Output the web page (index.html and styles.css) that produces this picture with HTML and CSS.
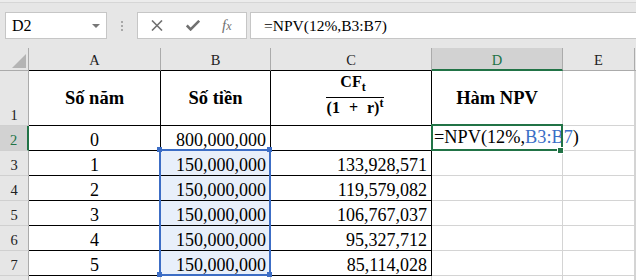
FILE: index.html
```html
<!DOCTYPE html>
<html lang="vi">
  <head>
    <meta charset="UTF-8" />
    <title>Hàm NPV</title>
    <link rel="stylesheet" href="styles.css">
  </head>
  <body>
    <!-- thanh công thức -->
    <div class="bar">
      <div class="bar-line"></div>
      <div class="bar-row">
        <div class="namebox">
          <span>D2</span>
          <i class="caret"></i>
        </div>
        <div class="grip"><i></i><i></i><i></i></div>
        <div class="fbtns">
          <svg width="12" height="11" viewBox="0 0 12 11">
            <path d="M1 0.5 L11 10.5 M11 0.5 L1 10.5" stroke="#707070" stroke-width="1.6" fill="none" />
          </svg>
          <svg width="14" height="11" viewBox="0 0 14 11">
            <path d="M0.8 5.5 L4.6 9.4 L13.2 0.8" stroke="#707070" stroke-width="2.6" fill="none" />
          </svg>
          <span class="fx">f<span>x</span></span>
        </div>
        <div class="finput">=NPV(12%,B3:B7)</div>
      </div>
    </div>

    <!-- bảng tính -->
    <div class="sheet">
      <div class="ch corner"><i class="tri"></i></div>
      <div class="ch tb">A</div>
      <div class="ch tb">B</div>
      <div class="ch tb">C</div>
      <div class="ch sel">D</div>
      <div class="ch">E</div>
      <div class="ch last"></div>

      <div class="rh">1</div>
      <div class="c t hd">Số năm</div>
      <div class="c t hd">Số tiền</div>
      <div class="c t frac-cell">
        <div class="frac">
          <div class="num">CF<sub>t</sub></div>
          <div class="den">(1<span class="plus">+</span>r)<sup>t</sup></div>
        </div>
      </div>
      <div class="c hd">Hàm NPV</div>
      <div class="c"></div>
      <div class="c"></div>

      <div class="rh sel">2</div>
      <div class="c t ctr">0</div>
      <div class="c t num">800,000,000</div>
      <div class="c t"></div>
      <div class="c edit-cell">=NPV(12%,<span class="ref">B3:B7</span>)<i class="cursor"></i></div>
      <div class="c"></div>
      <div class="c"></div>

      <div class="rh">3</div>
      <div class="c t ctr">1</div>
      <div class="c t num rng">150,000,000</div>
      <div class="c t num">133,928,571</div>
      <div class="c"></div>
      <div class="c"></div>
      <div class="c"></div>

      <div class="rh">4</div>
      <div class="c t ctr">2</div>
      <div class="c t num rng">150,000,000</div>
      <div class="c t num">119,579,082</div>
      <div class="c"></div>
      <div class="c"></div>
      <div class="c"></div>

      <div class="rh">5</div>
      <div class="c t ctr">3</div>
      <div class="c t num rng">150,000,000</div>
      <div class="c t num">106,767,037</div>
      <div class="c"></div>
      <div class="c"></div>
      <div class="c"></div>

      <div class="rh">6</div>
      <div class="c t ctr">4</div>
      <div class="c t num rng">150,000,000</div>
      <div class="c t num">95,327,712</div>
      <div class="c"></div>
      <div class="c"></div>
      <div class="c"></div>

      <div class="rh">7</div>
      <div class="c t ctr">5</div>
      <div class="c t num rng">150,000,000</div>
      <div class="c t num">85,114,028</div>
      <div class="c"></div>
      <div class="c"></div>
      <div class="c"></div>

      <div class="rh"></div>
      <div class="c"></div>
      <div class="c"></div>
      <div class="c"></div>
      <div class="c"></div>
      <div class="c"></div>
      <div class="c"></div>

      <!-- vùng chọn B3:B7 và ô đang sửa D2 -->
      <div class="range"></div>
      <i class="handle blue" style="left: 157px; top: 99px"></i>
      <i class="handle blue" style="left: 267px; top: 99px"></i>
      <i class="handle blue" style="left: 157px; top: 224px"></i>
      <i class="handle blue" style="left: 267px; top: 224px"></i>
      <div class="edit"></div>
      <i class="handle green" style="left: 558px; top: 100px"></i>
    </div>
  </body>
</html>
```

FILE: styles.css
```css
:root {
  --bar-bg: #e6e6e6;
  --box-border: #c6c6c6;
  --grid: #d4d4d4;
  --hd-line: #ababab;
  --green: #217346;
  --blue: #3c6dc5;
}

* {
  box-sizing: border-box;
}

body {
  margin: 0;
  width: 636px;
  height: 280px;
  overflow: hidden;
  background: #fff;
  font-family: "Liberation Serif", "Times New Roman", "DejaVu Serif", serif;
  color: #000;
}

/* thanh công thức */
.bar {
  height: 48px;
  background: var(--bar-bg);
}
.bar-line {
  height: 3px;
  background: #ececec;
  border-bottom: 1px solid #d6d6d6;
}
.bar-row {
  display: flex;
  align-items: center;
  margin-top: 9px;
  padding-left: 5px;
  height: 27px;
}
.namebox {
  width: 102px;
  height: 27px;
  display: flex;
  align-items: center;
  justify-content: space-between;
  padding: 0 6px 0 6px;
  background: #fff;
  border: 1px solid var(--box-border);
  font-size: 16px;
}
.caret {
  width: 0;
  height: 0;
  border-left: 4px solid transparent;
  border-right: 4px solid transparent;
  border-top: 4px solid #777;
  margin-top: 1px;
}
.grip {
  display: flex;
  flex-direction: column;
  gap: 2px;
  margin-left: 14px;
}
.grip i {
  width: 2px;
  height: 2px;
  background: #a8a8a8;
}
.fbtns {
  margin-left: 14px;
  width: 110px;
  height: 27px;
  display: flex;
  align-items: center;
  background: #fff;
  border: 1px solid var(--box-border);
  padding-left: 13px;
}
.fbtns svg:nth-child(2) {
  margin-left: 23px;
}
.fx {
  margin-left: 22px;
  font-style: italic;
  font-size: 15px;
  color: #707070;
  line-height: 1;
}
.fx span {
  font-size: 12px;
}
.finput {
  flex: 1;
  margin-left: 3px;
  margin-right: -2px;
  height: 27px;
  display: flex;
  align-items: center;
  padding-left: 13px;
  background: #fff;
  border: 1px solid var(--box-border);
  font-size: 15.5px;
}

/* bảng tính */
.sheet {
  position: relative;
  display: grid;
  grid-template-columns: 29px 132px 110px 161px 131px 72px 1px;
  grid-template-rows: 23px 55px repeat(7, 25px);
}

.ch {
  display: flex;
  align-items: flex-end;
  justify-content: center;
  padding-bottom: 1px;
  background: var(--bar-bg);
  border-right: 1px solid var(--hd-line);
  border-bottom: 1px solid var(--hd-line);
  font-size: 14.5px;
  line-height: 18px;
  color: #222;
}
.ch.tb {
  border-bottom-color: #000;
}
.ch.sel {
  background: #d2d2d2;
  color: var(--green);
  border-bottom: 2px solid var(--green);
  padding-bottom: 0;
}
.ch.last {
  border-right: 0;
}
.corner {
  justify-content: flex-end;
  padding: 0 2px 2px 0;
}
.tri {
  width: 0;
  height: 0;
  border-left: 14px solid transparent;
  border-bottom: 14px solid #b4b4b4;
}

.rh {
  display: flex;
  align-items: flex-end;
  justify-content: center;
  padding-bottom: 1px;
  background: var(--bar-bg);
  border-right: 1px solid var(--hd-line);
  border-bottom: 1px solid #d0d0d0;
  font-size: 14.5px;
  line-height: 18px;
  color: #222;
}
.rh.sel {
  background: #d2d2d2;
  color: var(--green);
  border-right: 2px solid var(--green);
}

.c {
  display: flex;
  align-items: flex-end;
  border-right: 1px solid var(--grid);
  border-bottom: 1px solid var(--grid);
  font-size: 18px;
  line-height: 20px;
  white-space: nowrap;
}
.c.t {
  border-color: #000;
}
.ctr {
  justify-content: center;
}
.num {
  justify-content: flex-end;
  padding-right: 4px;
}
.rng {
  background: #e8effa;
}
.hd {
  align-items: center;
  justify-content: center;
  font-weight: bold;
  font-size: 18.5px;
}

/* công thức CF_t / (1 + r)^t */
.frac-cell {
  align-items: flex-start;
  justify-content: center;
  padding: 2px 0 0 8px;
}
.frac {
  display: flex;
  flex-direction: column;
  align-items: center;
  font-weight: bold;
  font-size: 16px;
  line-height: 18px;
}
.frac .num {
  padding: 0 4px 6px 0;
}
.frac .den {
  border-top: 1px solid #000;
  padding: 1px 1px 0 1px;
}
.plus {
  margin: 0 9px;
}
.frac sub,
.frac sup {
  font-size: 12px;
  line-height: 0;
}

.edit-cell {
  align-items: flex-end;
  padding: 0 0 2px 2px;
  font-size: 18.3px;
  line-height: 22px;
}
.ref {
  color: #3a6ec6;
}
.cursor {
  display: inline-block;
  width: 1px;
  height: 23px;
  margin-left: 1px;
  background: #000;
  vertical-align: -6px;
}

.range {
  position: absolute;
  left: 159px;
  top: 101px;
  width: 112px;
  height: 127px;
  border: 2px solid var(--blue);
}
.edit {
  position: absolute;
  left: 431px;
  top: 76px;
  width: 132px;
  height: 27px;
  border: 2px solid var(--green);
}
.handle {
  position: absolute;
  width: 5px;
  height: 5px;
}
.handle.blue {
  background: var(--blue);
}
.handle.green {
  background: var(--green);
  outline: 1px solid #fff;
}
```
